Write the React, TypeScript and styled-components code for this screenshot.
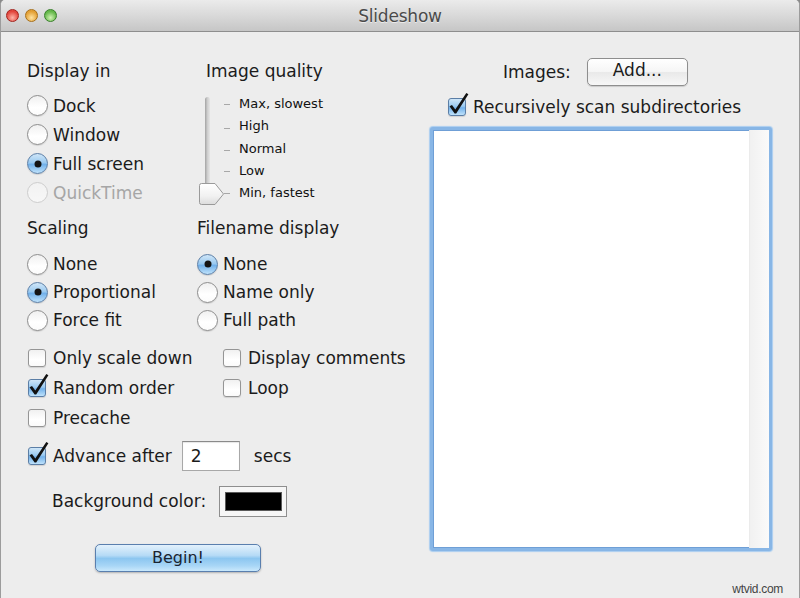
import React from "react";
import styled, {createGlobalStyle} from "styled-components";

const GlobalStyle = createGlobalStyle`
    html, body {
        margin: 0;
        padding: 0;
    }
    body {
        width: 800px;
        height: 598px;
        overflow: hidden;
        background: #8a8a8a;
        font-family: "DejaVu Sans", "Liberation Sans", sans-serif;
        color: #1b1b1b;
    }
`

type RadioProps = { label: string, checked?: boolean, disabled?: boolean, height?: number }
type CheckProps = { label?: string, checked?: boolean }

const Radio = ({label, checked, disabled, height}: RadioProps) => (
    <OptionRow $height={height}>
        <RadioDot $checked={checked} $disabled={disabled}/>
        <OptionLabel $disabled={disabled}>{label}</OptionLabel>
    </OptionRow>
)

const CheckMark = () => (
    <CheckSvg width="22" height="24" viewBox="0 -6 22 24">
        <path d="M1.5 8.2 L4 6.9 L7.3 11.4 L18.3 -5 L20.4 -3.7 L8.2 15.6 L6.6 15.6 Z" fill="#111"/>
    </CheckSvg>
)

const Check = ({label, checked}: CheckProps) => (
    <OptionRow $height={30}>
        <CheckBox $checked={checked}>{checked && <CheckMark/>}</CheckBox>
        {label && <OptionLabel>{label}</OptionLabel>}
    </OptionRow>
)

const qualityLevels = ["Max, slowest", "High", "Normal", "Low", "Min, fastest"]

const QualitySlider = () => (
    <SliderWrap>
        <svg width="41" height="112" viewBox="0 0 41 112">
            <defs>
                <linearGradient id="track" x1="0" x2="1" y1="0" y2="0">
                    <stop offset="0" stopColor="#a3a3a3"/>
                    <stop offset="0.5" stopColor="#cfcfcf"/>
                    <stop offset="1" stopColor="#e6e6e6"/>
                </linearGradient>
                <linearGradient id="thumb" x1="0" x2="0" y1="0" y2="1">
                    <stop offset="0" stopColor="#ffffff"/>
                    <stop offset="0.6" stopColor="#f1f1f1"/>
                    <stop offset="1" stopColor="#dcdcdc"/>
                </linearGradient>
            </defs>
            <rect x="7" y="4" width="5" height="96" rx="2.5" fill="url(#track)"/>
            {[11, 35, 57, 78, 100].map(y => (
                <line key={y} x1="26" x2="32" y1={y + 0.5} y2={y + 0.5} stroke="#a8a8a8" strokeWidth="1"/>
            ))}
            <path d="M3.5 90.5 H17 L25.5 101 L17 111.5 H3.5 Q1.5 111.5 1.5 109.5 V92.5 Q1.5 90.5 3.5 90.5 Z"
                  fill="url(#thumb)" stroke="#9a9a9a" strokeWidth="1"/>
        </svg>
        <SliderLabels>
            {qualityLevels.map(l => <SliderLabel key={l}>{l}</SliderLabel>)}
        </SliderLabels>
    </SliderWrap>
)

export default function App() {
    return (
        <>
            <GlobalStyle/>
            <Window>
                <TitleBar>
                    <Lights>
                        <Light $color="red"/>
                        <Light $color="yellow"/>
                        <Light $color="green"/>
                    </Lights>
                    <Title>Slideshow</Title>
                    <span/>
                </TitleBar>
                <Body>
                    <LeftPane>
                        <Section $cols="179px 1fr">
                            <Group>
                                <Heading>Display in</Heading>
                                <OptionList $top={9}>
                                    <Radio label="Dock"/>
                                    <Radio label="Window"/>
                                    <Radio label="Full screen" checked/>
                                    <Radio label="QuickTime" disabled/>
                                </OptionList>
                            </Group>
                            <Group>
                                <Heading>Image quality</Heading>
                                <QualitySlider/>
                            </Group>
                        </Section>
                        <Section $cols="170px 1fr" $top={10}>
                            <Group>
                                <Heading>Scaling</Heading>
                                <OptionList $top={11}>
                                    <Radio label="None" height={28}/>
                                    <Radio label="Proportional" checked height={28}/>
                                    <Radio label="Force fit" height={28}/>
                                </OptionList>
                            </Group>
                            <Group>
                                <Heading>Filename display</Heading>
                                <OptionList $top={11}>
                                    <Radio label="None" checked height={28}/>
                                    <Radio label="Name only" height={28}/>
                                    <Radio label="Full path" height={28}/>
                                </OptionList>
                            </Group>
                        </Section>
                        <CheckGrid>
                            <Check label="Only scale down"/>
                            <Check label="Display comments"/>
                            <Check label="Random order" checked/>
                            <Check label="Loop"/>
                            <Check label="Precache"/>
                        </CheckGrid>
                        <AdvanceRow>
                            <Check label="Advance after" checked/>
                            <NumberField defaultValue="2"/>
                            <Unit>secs</Unit>
                        </AdvanceRow>
                        <ColorRow>
                            <OptionLabel>Background color:</OptionLabel>
                            <ColorWell>
                                <ColorSwatch $color="#000"/>
                            </ColorWell>
                        </ColorRow>
                        <BeginButton>Begin!</BeginButton>
                    </LeftPane>
                    <RightPane>
                        <ImagesHeader>
                            <OptionLabel>Images:</OptionLabel>
                            <PushButton>Add...</PushButton>
                        </ImagesHeader>
                        <RecursiveRow>
                            <Check label="Recursively scan subdirectories" checked/>
                        </RecursiveRow>
                        <ImageList>
                            <ListBody/>
                            <ScrollTrack/>
                        </ImageList>
                    </RightPane>
                </Body>
                <Watermark>wtvid.com</Watermark>
            </Window>
        </>
    )
}

const Window = styled.div`
    position: relative;
    width: 800px;
    height: 598px;
    box-sizing: border-box;
    background: #ededed;
    border-left: 1px solid #9c9c9c;
    border-right: 1px solid #9c9c9c;
    border-radius: 5px 5px 0 0;
    overflow: hidden;
    display: flex;
    flex-direction: column;
`
const TitleBar = styled.div`
    height: 31px;
    flex-shrink: 0;
    display: grid;
    grid-template-columns: 1fr auto 1fr;
    align-items: center;
    background: linear-gradient(#ebebeb, #d9d9d9 50%, #c6c6c6);
    border-bottom: 1px solid #8e8e8e;
`
const Lights = styled.div`
    display: flex;
    gap: 6px;
    padding-left: 5px;
`
const lightColors: Record<string, [string, string, string]> = {
    red: ["#ffb4a8", "#e2463d", "#a3221c"],
    yellow: ["#ffe3a0", "#e3a035", "#a8701a"],
    green: ["#d2f3b4", "#65b84a", "#38802a"],
}
const Light = styled.span<{ $color: string }>`
    width: 13px;
    height: 13px;
    border-radius: 50%;
    box-sizing: border-box;
    border: 1px solid ${p => lightColors[p.$color][2]};
    background: radial-gradient(circle at 50% 70%, ${p => lightColors[p.$color][0]} 0%, ${p => lightColors[p.$color][1]} 65%);
`
const Title = styled.div`
    font-size: 17px;
    color: #4a4a4a;
    letter-spacing: -0.2px;
    text-shadow: 0 1px 0 rgba(255, 255, 255, 0.6);
`
const Body = styled.div`
    flex: 1;
    display: flex;
`
const LeftPane = styled.div`
    width: 378px;
    flex-shrink: 0;
    padding: 28px 0 0 26px;
    display: flex;
    flex-direction: column;
`
const Section = styled.div<{ $cols: string, $top?: number }>`
    display: grid;
    grid-template-columns: ${p => p.$cols};
    margin-top: ${p => p.$top ?? 0}px;
`
const Group = styled.div`
    display: flex;
    flex-direction: column;
`
const Heading = styled.div`
    font-size: 17px;
    line-height: 22px;
    height: 22px;
    white-space: nowrap;
`
const OptionList = styled.div<{ $top?: number }>`
    margin-top: ${p => p.$top ?? 0}px;
    display: flex;
    flex-direction: column;
`
const OptionRow = styled.div<{ $height?: number }>`
    display: flex;
    align-items: center;
    height: ${p => p.$height ?? 29}px;
`
const OptionLabel = styled.span<{ $disabled?: boolean }>`
    font-size: 17px;
    line-height: 20px;
    white-space: nowrap;
    color: ${p => p.$disabled ? "#a6a6a6" : "#1b1b1b"};
`
const RadioDot = styled.span<{ $checked?: boolean, $disabled?: boolean }>`
    position: relative;
    width: 21px;
    height: 21px;
    flex-shrink: 0;
    box-sizing: border-box;
    border-radius: 50%;
    margin-right: 5px;
    border: 1px solid ${p => p.$disabled ? "#cdcdcd" : p.$checked ? "#5b7ea6" : "#8e8e8e"};
    background: ${p => p.$disabled
            ? "linear-gradient(#f2f2f2, #f7f7f7)"
            : p.$checked
                    ? "linear-gradient(#cfe6f8, #9bcaf0 45%, #72b1ea 55%, #bfe2fb)"
                    : "linear-gradient(#f0f0f0, #ffffff 60%, #fbfbfb)"};
    box-shadow: ${p => p.$disabled ? "none" : "0 1px 1px rgba(0,0,0,0.12)"};

    &::after {
        content: '';
        display: ${p => p.$checked ? "block" : "none"};
        position: absolute;
        left: 50%;
        top: 50%;
        width: 7px;
        height: 7px;
        border-radius: 50%;
        background: #141414;
        transform: translate(-50%, -50%);
    }
`
const CheckBox = styled.span<{ $checked?: boolean }>`
    position: relative;
    width: 18px;
    height: 18px;
    flex-shrink: 0;
    box-sizing: border-box;
    margin: 0 7px 0 1px;
    border-radius: 3px;
    border: 1px solid ${p => p.$checked ? "#5b7ea6" : "#959595"};
    background: ${p => p.$checked
            ? "linear-gradient(#cfe6f8, #9bcaf0 45%, #72b1ea 55%, #bfe2fb)"
            : "linear-gradient(#f1f1f1, #ffffff 60%, #fafafa)"};
    box-shadow: 0 1px 1px rgba(0, 0, 0, 0.12);
`
const CheckSvg = styled.svg`
    position: absolute;
    left: -1px;
    top: -7px;
    overflow: visible;
`
const SliderWrap = styled.div`
    display: flex;
    margin: 11px 0 0 -8px;
`
const SliderLabels = styled.div`
    display: flex;
    flex-direction: column;
`
const SliderLabel = styled.div`
    font-size: 13px;
    line-height: 22.3px;
    height: 22.3px;
    white-space: nowrap;
    color: #111;
`
const CheckGrid = styled.div`
    display: grid;
    grid-template-columns: 195px 1fr;
    margin-top: 9px;
`
const AdvanceRow = styled.div`
    display: flex;
    align-items: center;
    height: 32px;
    margin-top: 7px;
`
const NumberField = styled.input`
    width: 58px;
    height: 30px;
    box-sizing: border-box;
    margin-left: 10px;
    padding: 0 8px;
    border: 1px solid #a8a8a8;
    border-top-color: #8a8a8a;
    background: #fff;
    box-shadow: inset 0 1px 1px rgba(0, 0, 0, 0.1);
    font-family: inherit;
    font-size: 17px;
    color: #1b1b1b;
    outline: none;
`
const Unit = styled.span`
    margin-left: 14px;
    font-size: 17px;
`
const ColorRow = styled.div`
    display: flex;
    align-items: center;
    height: 32px;
    margin: 13px 0 0 25px;
    gap: 13px;
`
const ColorWell = styled.div`
    width: 68px;
    height: 31px;
    box-sizing: border-box;
    border: 1px solid #8e8e8e;
    background: #f6f6f6;
    display: flex;
    align-items: center;
    justify-content: center;
`
const ColorSwatch = styled.div<{ $color: string }>`
    width: 55px;
    height: 17px;
    background: ${p => p.$color};
    border: 1px solid #5a5a5a;
`
const BeginButton = styled.button`
    width: 166px;
    height: 28px;
    margin: 27px 0 0 68px;
    border: 1px solid #5a7fae;
    border-radius: 5px;
    background: linear-gradient(#e3f1fc, #b6dbf6 40%, #8cc6f0 52%, #a8d6f6 80%, #c9e8fc);
    box-shadow: 0 1px 2px rgba(0, 0, 0, 0.25);
    font-family: inherit;
    font-size: 16px;
    color: #1a2430;
    padding: 0 0 2px;
`
const RightPane = styled.div`
    flex: 1;
    display: flex;
    flex-direction: column;
    padding-left: 25px;
`
const ImagesHeader = styled.div`
    display: flex;
    align-items: center;
    height: 28px;
    margin: 26px 0 0 73px;
    gap: 16px;
`
const PushButton = styled.button`
    width: 101px;
    height: 28px;
    border: 1px solid #8e8e8e;
    border-radius: 5px;
    background: linear-gradient(#ffffff, #f5f5f5 50%, #e9e9e9 52%, #f7f7f7);
    box-shadow: 0 1px 1px rgba(0, 0, 0, 0.15);
    font-family: inherit;
    font-size: 17px;
    color: #1b1b1b;
    padding: 0 0 4px;
`
const RecursiveRow = styled.div`
    display: flex;
    height: 26px;
    margin: 8px 0 0 17px;
    align-items: center;
`
const ImageList = styled.div`
    width: 342px;
    height: 424px;
    box-sizing: border-box;
    margin-top: 7px;
    border: 3px solid #88b6e6;
    border-radius: 3px;
    box-shadow: 0 0 1px 1px #a9cdf0, inset 0 0 0 1px #6f9fd6;
    background: #fff;
    display: flex;
`
const ListBody = styled.div`
    flex: 1;
`
const ScrollTrack = styled.div`
    width: 19px;
    border-left: 1px solid #ebebeb;
    background: linear-gradient(90deg, #f1f1f1, #fafafa);
`
const Watermark = styled.div`
    position: absolute;
    right: 16px;
    bottom: 2px;
    font-family: "Liberation Sans", sans-serif;
    font-size: 12px;
    color: #444;
    letter-spacing: -0.3px;
`
